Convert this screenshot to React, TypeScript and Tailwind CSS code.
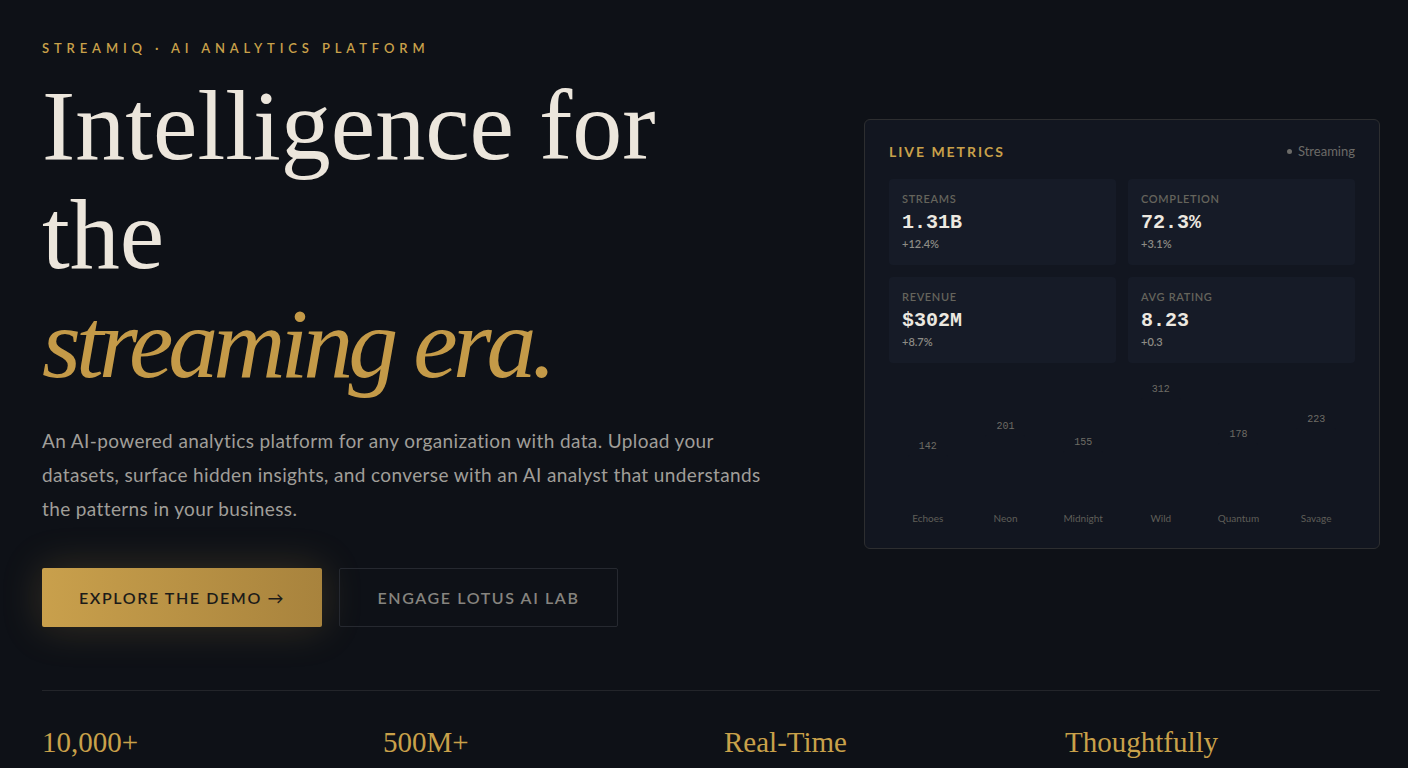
import React from "react";

const serif = { fontFamily: '"Liberation Serif", "Times New Roman", serif' };
const sans = { fontFamily: 'Lato, "Noto Sans", sans-serif' };
const mono = { fontFamily: '"Liberation Mono", "DejaVu Sans Mono", monospace' };

const tiles = [
  { label: "STREAMS", value: "1.31B", delta: "+12.4%" },
  { label: "COMPLETION", value: "72.3%", delta: "+3.1%" },
  { label: "REVENUE", value: "$302M", delta: "+8.7%" },
  { label: "AVG RATING", value: "8.23", delta: "+0.3" },
];

const bars = [
  { name: "Echoes", v: 142 },
  { name: "Neon", v: 201 },
  { name: "Midnight", v: 155 },
  { name: "Wild", v: 312 },
  { name: "Quantum", v: 178 },
  { name: "Savage", v: 223 },
];

const stats = [
  { n: "10,000+", l: "RECORDS ANALYZED" },
  { n: "500M+", l: "DATA POINTS PROCESSED" },
  { n: "Real-Time", l: "AI INSIGHTS GENERATED" },
  { n: "Thoughtfully", l: "BUILT BY LOTUS AI LAB" },
];

export default function App() {
  return (
    <div className="h-[768px] w-full overflow-hidden bg-[#0e1117]" style={sans}>
      <div className="pl-[42px] pr-[28px] pt-[40px]">
        <div className="flex items-center">
          <div className="w-[760px] shrink-0">
            <div className="text-[13px] leading-[16px] font-semibold tracking-[0.375em] text-[#c9a14a]">
              STREAMIQ · AI ANALYTICS PLATFORM
            </div>
            <h1
              className="mt-[15px] max-w-[740px] text-[100px] leading-[109px] font-normal text-[#ece6dc]"
              style={serif}
            >
              Intelligence for the{" "}
              <span className="block italic text-[#c49a48] tracking-[-0.05em]">streaming era.</span>
            </h1>
            <p className="mt-[26px] text-[19px] leading-[34px] tracking-[0.02em] text-[#a09e99]">
              An AI-powered analytics platform for any organization with data. Upload your
              <br />
              datasets, surface hidden insights, and converse with an AI analyst that understands
              <br />
              the patterns in your business.
            </p>
            <div className="mt-[42px] flex gap-[17px]">
              <button className="h-[59px] w-[280px] rounded-[2px] bg-gradient-to-r from-[#c9a04c] to-[#a8833d] text-[16px] font-semibold tracking-[0.1em] text-[#1c1b19] shadow-[0_0_40px_rgba(201,160,76,0.22)]">
                EXPLORE THE DEMO →
              </button>
              <button className="h-[59px] w-[279px] rounded-[2px] border border-[#262930] bg-transparent text-[16px] font-semibold tracking-[0.1em] text-[#86847f]">
                ENGAGE LOTUS AI LAB
              </button>
            </div>
          </div>

          <div className="ml-auto w-[516px] rounded-[6px] border border-[#2d2e30] bg-[#121620] p-[24px]">
            <div className="flex h-[16px] items-center justify-between">
              <div className="text-[14px] font-bold tracking-[0.14em] text-[#c9a14a]">LIVE METRICS</div>
              <div className="flex items-center gap-[6px] text-[13px] text-[#6c6b68]">
                <span className="h-[5px] w-[5px] rounded-full bg-[#6c6b68]" />
                Streaming
              </div>
            </div>
            <div className="mt-[19px] grid grid-cols-2 gap-[12px]">
              {tiles.map((t) => (
                <div key={t.label} className="h-[86px] rounded-[4px] bg-[#161b27] px-[13px] pt-[13px]">
                  <div className="text-[11px] leading-[14px] font-semibold tracking-[0.06em] text-[#65645c]">
                    {t.label}
                  </div>
                  <div className="mt-[5px] text-[20px] leading-[24px] font-bold text-[#ece8e0]" style={mono}>
                    {t.value}
                  </div>
                  <div className="mt-[3px] text-[11px] leading-[12px] font-semibold text-[#8d8b85]">{t.delta}</div>
                </div>
              ))}
            </div>
            <div className="mt-[19px]">
              <div className="grid h-[121px] grid-cols-6">
                {bars.map((b) => (
                  <div key={b.name} className="flex flex-col items-center justify-end">
                    <div className="text-[10px] leading-[12px] text-[#6e6c65]" style={mono}>
                      {b.v}
                    </div>
                    <div
                      className="mt-[2px] w-[40px] rounded-t-[2px] bg-[#121620]"
                      style={{ height: `${b.v * 0.335}px` }}
                    />
                  </div>
                ))}
              </div>
              <div className="mt-[9px] grid grid-cols-6">
                {bars.map((b) => (
                  <div key={b.name} className="text-center text-[10px] leading-[12px] text-[#5f5e58]">
                    {b.name}
                  </div>
                ))}
              </div>
            </div>
          </div>
        </div>

        <div className="mt-[63px] h-px w-full bg-[#23252a]" />
        <div className="grid grid-cols-4 gap-[26px] pt-[31px]">
          {stats.map((s) => (
            <div key={s.n}>
              <div className="text-[29px] leading-[40px] text-[#c9a14a]" style={serif}>
                {s.n}
              </div>
              <div className="mt-[4px] text-[11px] leading-[14px] tracking-[0.12em] text-[#5c5b57]">{s.l}</div>
            </div>
          ))}
        </div>
      </div>
    </div>
  );
}
